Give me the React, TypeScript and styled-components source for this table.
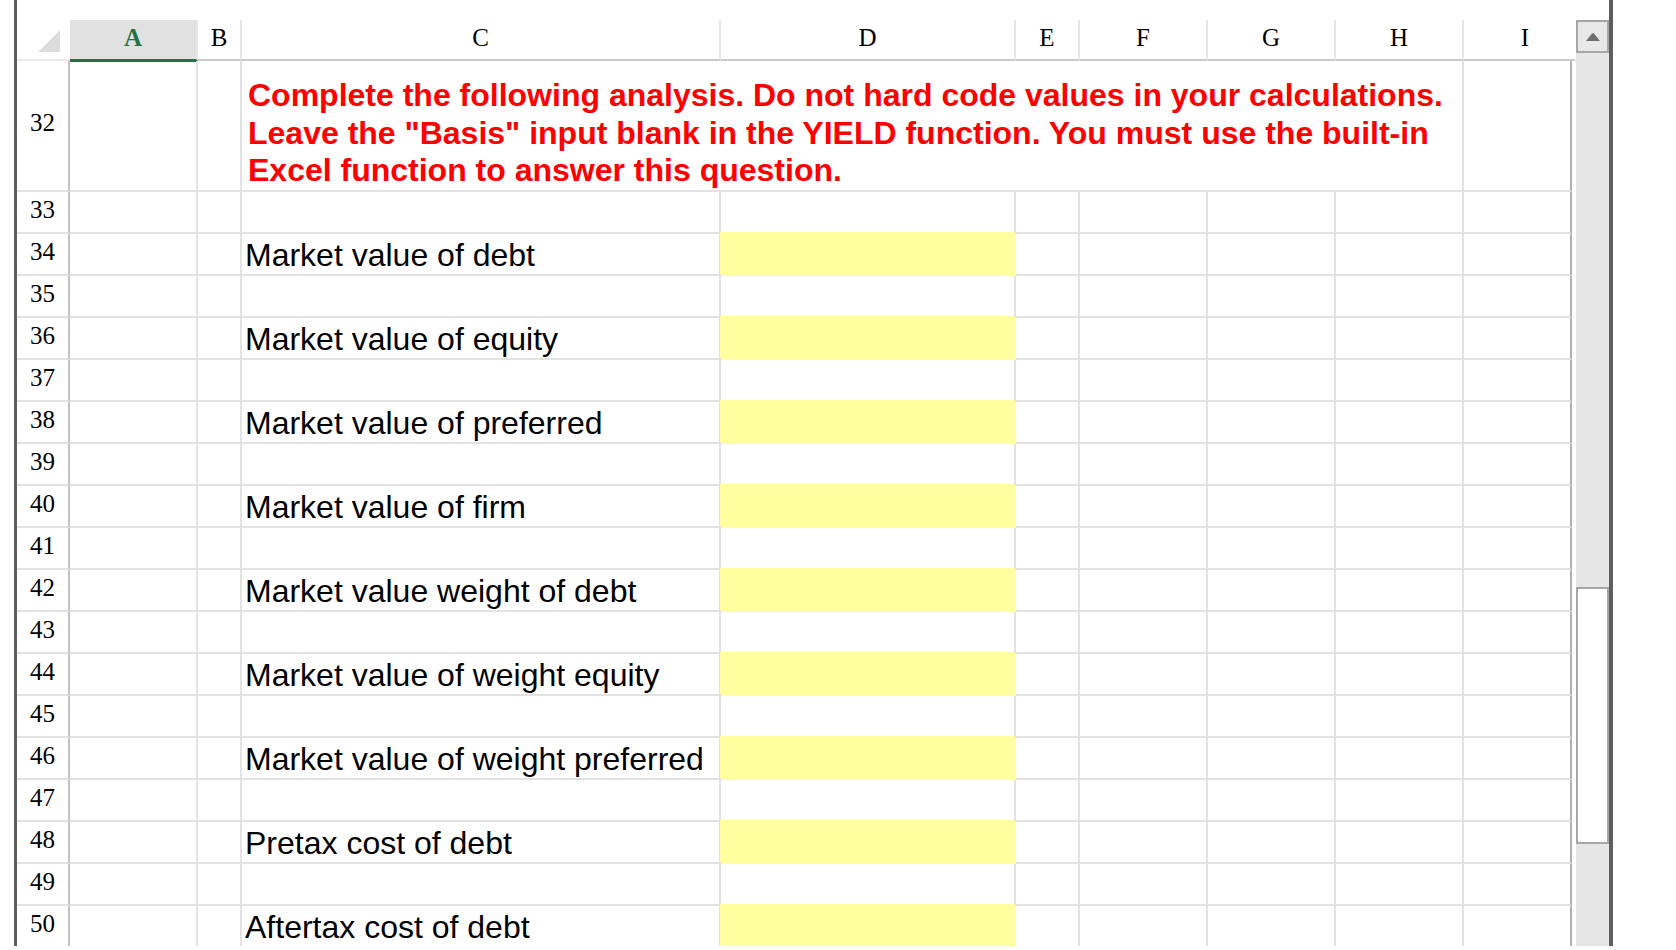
import React from 'react';
import styled, { createGlobalStyle, css } from 'styled-components';

const GlobalStyle = createGlobalStyle`
  html, body {
    margin: 0;
    padding: 0;
    background: #ffffff;
  }
  body {
    overflow: hidden;
  }
`;

const COLUMNS = ['A', 'B', 'C', 'D', 'E', 'F', 'G', 'H', 'I'];
const BODY_TEMPLATE = '53px 128px 44px 479px 295px 64px 128px 128px 128px 108px';
const HEAD_TEMPLATE = '53px 128px 44px 479px 295px 64px 128px 128px 128px 112px';

const LABELS: Record<number, string> = {
  34: 'Market value of debt',
  36: 'Market value of equity',
  38: 'Market value of preferred',
  40: 'Market value of firm',
  42: 'Market value weight of debt',
  44: 'Market value of weight equity',
  46: 'Market value of weight preferred',
  48: 'Pretax cost of debt',
  50: 'Aftertax cost of debt'
};

const ROWS = Array.from({ length: 18 }, (_, i) => 33 + i);

const Page = styled.div`
  display: flex;
  height: 946px;
  overflow: hidden;
  background: #ffffff;
`;

const Margin = styled.div`
  width: 14px;
  flex: none;
`;

const Frame = styled.div<{ $width: number }>`
  width: ${({ $width }) => $width}px;
  flex: none;
  background: #5e5e5e;
`;

const Sheet = styled.div`
  width: 1559px;
  flex: none;
  padding-top: 20px;
  display: flex;
  flex-direction: column;
`;

const HeaderRow = styled.div`
  display: grid;
  grid-template-columns: ${HEAD_TEMPLATE};
  grid-template-rows: 41px;
`;

const Corner = styled.div`
  box-sizing: border-box;
  border-bottom: 2px solid #e9e9e9;
  display: flex;
  justify-content: flex-end;
  align-items: flex-end;
  padding: 0 10px 7px 0;
`;

const CornerMark = styled.div`
  width: 22px;
  height: 22px;
  background: #dcdcdc;
  clip-path: polygon(100% 0, 100% 100%, 0 100%);
`;

const ColumnHead = styled.div<{ $active?: boolean; $last?: boolean }>`
  box-sizing: border-box;
  display: flex;
  align-items: center;
  justify-content: center;
  padding-bottom: 4px;
  font-family: 'Liberation Serif', 'Times New Roman', serif;
  font-size: 25px;
  color: #000000;
  border-right: 2px solid #e6e6e6;
  border-bottom: 2px solid #c9c9c9;
  ${({ $last }) =>
    $last &&
    css`
      border-right-color: transparent;
      padding-left: 12px;
    `}
  ${({ $active }) =>
    $active &&
    css`
      background: #e1e1e1;
      color: #217346;
      font-weight: bold;
      border-bottom-color: #217346;
      box-shadow: 0 1px 0 #217346;
    `}
`;

const Body = styled.div`
  display: grid;
  width: 1555px;
  grid-template-columns: ${BODY_TEMPLATE};
  grid-template-rows: 131px;
  grid-auto-rows: 42px;
`;

const Cell = styled.div<{ $last?: boolean; $fill?: boolean }>`
  box-sizing: border-box;
  display: flex;
  align-items: flex-end;
  min-width: 0;
  border-right: 2px solid ${({ $last }) => ($last ? '#b1b1b1' : '#e2e2e2')};
  border-bottom: 2px solid #e2e2e2;
  ${({ $fill }) =>
    $fill &&
    css`
      background: #ffff9f;
      border-right-color: #ffff9f;
      border-bottom-color: #ffff9f;
      box-shadow: -1px -2px 0 #ffff9f;
    `}
`;

const RowHead = styled.div`
  box-sizing: border-box;
  display: flex;
  align-items: center;
  justify-content: center;
  padding-bottom: 5px;
  font-family: 'Liberation Serif', 'Times New Roman', serif;
  font-size: 25px;
  color: #000000;
  border-right: 2px solid #c2c2c2;
  border-bottom: 2px solid #e2e2e2;
`;

const Label = styled(Cell)`
  padding-left: 3px;
  font-family: 'Liberation Sans', Arial, sans-serif;
  font-size: 32px;
  color: #000000;
  white-space: nowrap;
`;

const Note = styled(Cell)`
  grid-column: span 6;
  padding: 0 0 0 6px;
  font-family: 'Liberation Sans', Arial, sans-serif;
  font-size: 32px;
  font-weight: bold;
  line-height: 37.7px;
  color: #ff0000;
  white-space: nowrap;
`;

const ScrollBar = styled.div`
  width: 33px;
  flex: none;
  margin-top: 20px;
  display: flex;
  flex-direction: column;
  background: #e6e6e6;
`;

const ScrollButton = styled.div`
  box-sizing: border-box;
  height: 33px;
  border: 2px solid #a6a6a6;
  background: #e8e8e8;
  display: flex;
  align-items: center;
  justify-content: center;
`;

const Thumb = styled.div`
  box-sizing: border-box;
  margin-top: 534px;
  height: 257px;
  border: 2px solid #a6a6a6;
  background: #ffffff;
`;

const App = () => (
  <>
    <GlobalStyle />
    <Page>
      <Margin />
      <Frame $width={3} />
      <Sheet>
        <HeaderRow>
          <Corner>
            <CornerMark />
          </Corner>
          {COLUMNS.map((c, i) => (
            <ColumnHead key={c} $active={c === 'A'} $last={i === COLUMNS.length - 1}>
              {c}
            </ColumnHead>
          ))}
        </HeaderRow>
        <Body>
          <RowHead>32</RowHead>
          <Cell />
          <Cell />
          <Note>
            Complete the following analysis. Do not hard code values in your calculations.
            <br />
            Leave the "Basis" input blank in the YIELD function. You must use the built-in
            <br />
            Excel function to answer this question.
          </Note>
          <Cell $last />
          {ROWS.map((row) => (
            <React.Fragment key={row}>
              <RowHead>{row}</RowHead>
              <Cell />
              <Cell />
              <Label>{LABELS[row] ?? ''}</Label>
              <Cell $fill={!!LABELS[row]} />
              <Cell />
              <Cell />
              <Cell />
              <Cell />
              <Cell $last />
            </React.Fragment>
          ))}
        </Body>
      </Sheet>
      <ScrollBar>
        <ScrollButton>
          <svg width="14" height="8" viewBox="0 0 14 8">
            <path d="M6 0.6 Q7 -0.2 8 0.6 L14 8 L0 8 Z" fill="#6e6e6e" />
          </svg>
        </ScrollButton>
        <Thumb />
      </ScrollBar>
      <Frame $width={4} />
    </Page>
  </>
);

export default App;
